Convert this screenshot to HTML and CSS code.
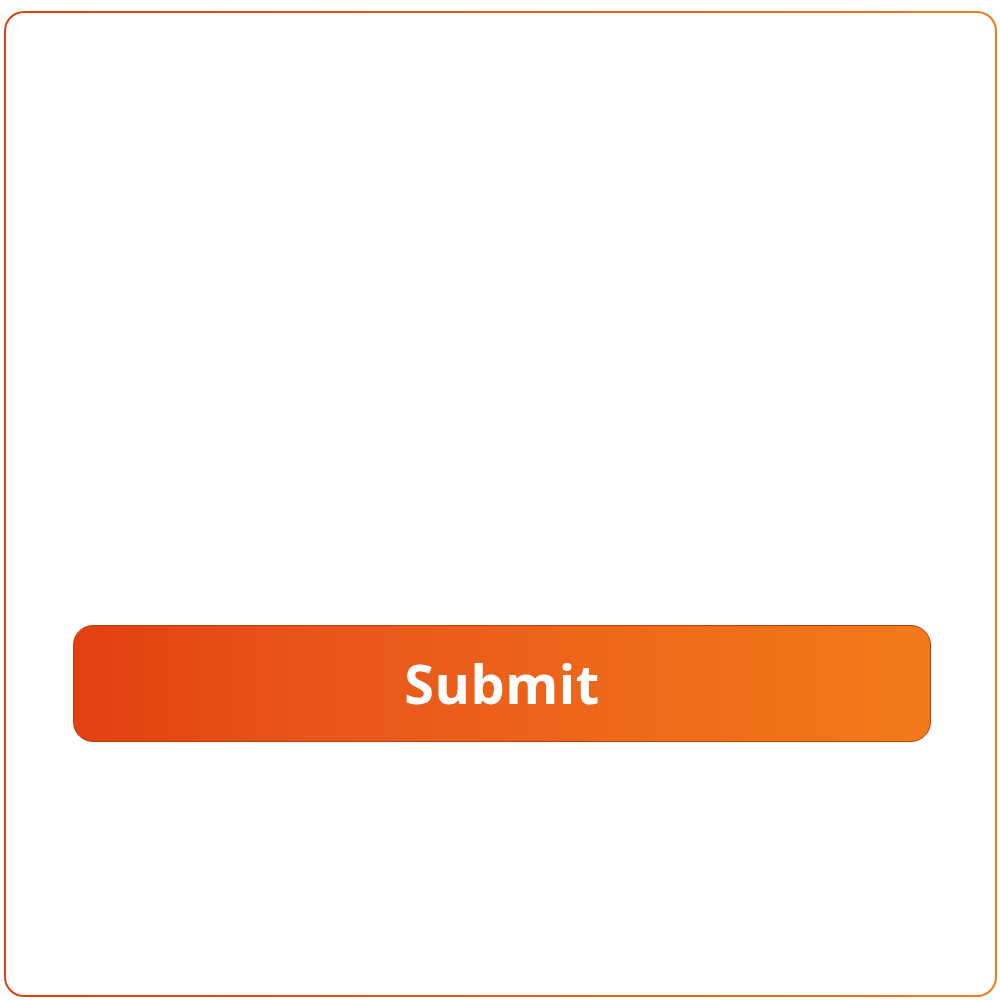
FILE: index.html
```html
<!DOCTYPE html>
<html>
<head>
<meta charset="utf-8">
<link rel="stylesheet" href="styles.css">
</head>
<body>
<div class="frame">
  <button class="submit">Submit</button>
</div>
</body>
</html>
```
FILE: styles.css
```css
html, body {
  margin: 0;
  padding: 0;
  background: #ffffff;
}
.frame {
  box-sizing: border-box;
  margin: 11px 0 0 4px;
  width: 993px;
  height: 986px;
  border: 2px solid transparent;
  border-radius: 20px;
  background:
    linear-gradient(#ffffff, #ffffff) padding-box,
    linear-gradient(90deg, #d9400f, #f07a1c) border-box;
  padding: 612px 0 0 67px;
}
.submit {
  box-sizing: border-box;
  display: flex;
  align-items: center;
  justify-content: center;
  width: 858px;
  height: 117px;
  border: 1px solid #b8400e;
  border-radius: 20px;
  background: linear-gradient(90deg, #e2400f 0%, #e8531a 25%, #ee661a 60%, #f37a1a 100%);
  color: #ffffff;
  font-family: "Open Sans", "DejaVu Sans", sans-serif;
  font-weight: 700;
  font-size: 54px;
  letter-spacing: 0.5px;
  padding: 0 0 1px 0;
  cursor: pointer;
}
```
